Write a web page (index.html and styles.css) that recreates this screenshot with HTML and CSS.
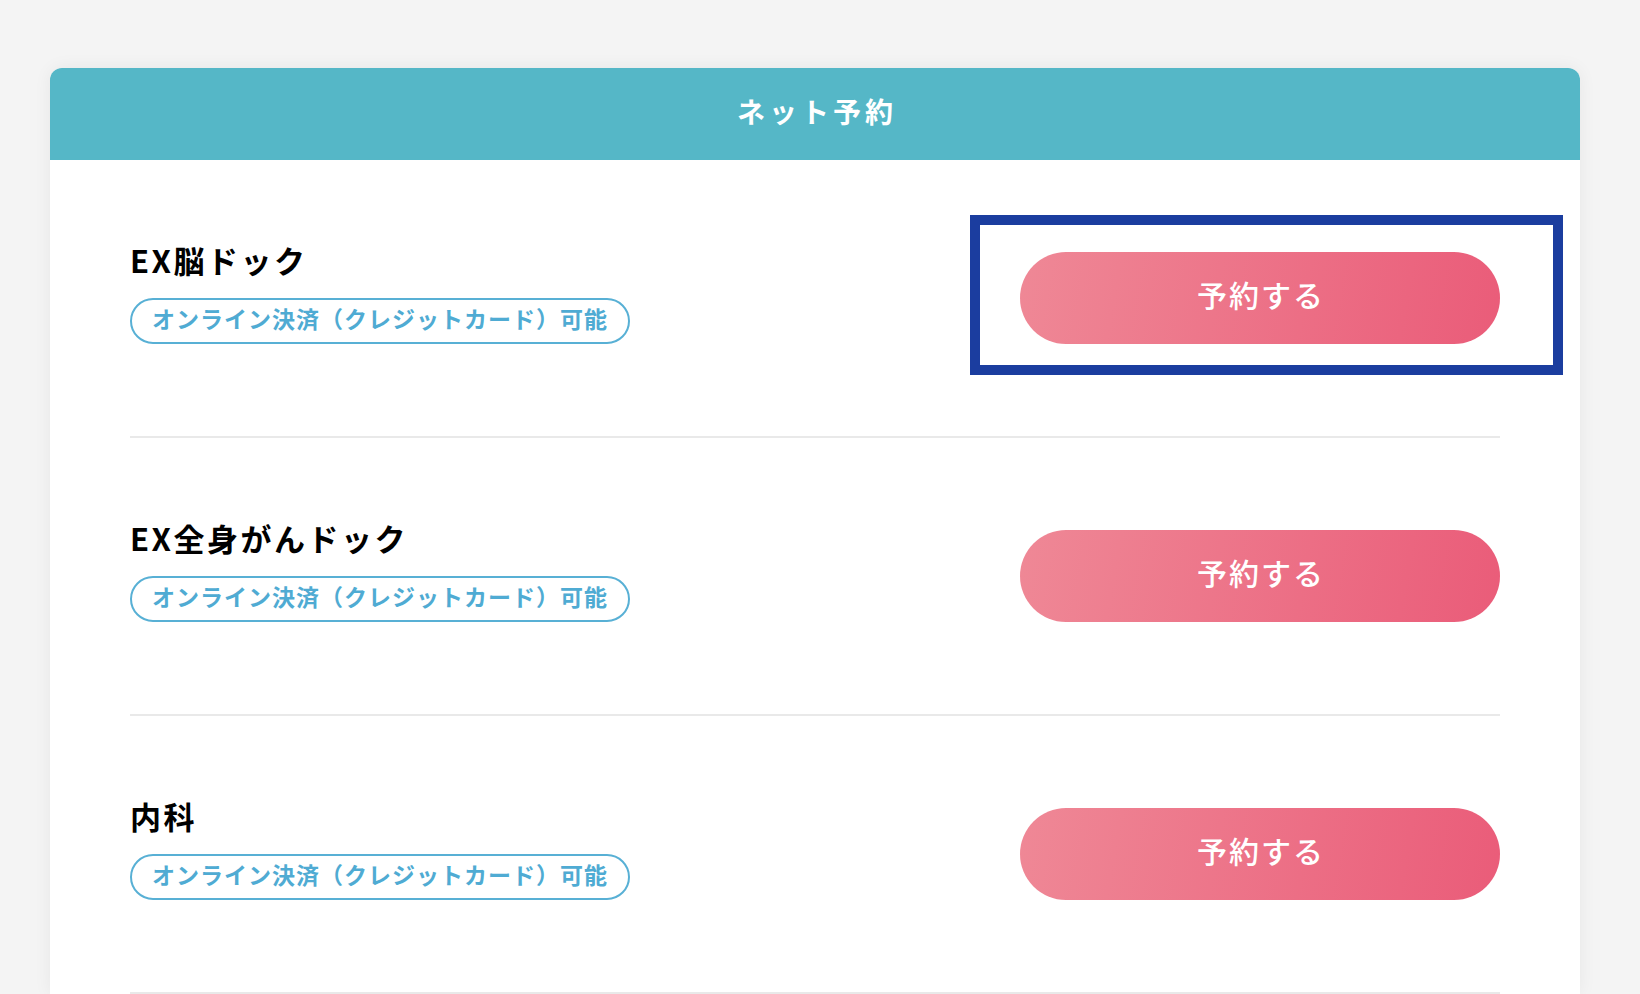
FILE: index.html
```html
<!DOCTYPE html>
<html lang="ja">
<head>
<meta charset="utf-8">
<title>ネット予約</title>
<link rel="stylesheet" href="styles.css">
</head>
<body>
<main class="page">
  <section class="card">
    <h2 class="card-head">ネット予約</h2>
    <ul class="list">
      <li class="row">
        <div class="info">
          <p class="name">EX脳ドック</p>
          <span class="tag">オンライン決済（クレジットカード）可能</span>
        </div>
        <div class="action">
          <a class="btn" href="#">予約する</a>
          <span class="focus-ring"></span>
        </div>
      </li>
      <li class="row">
        <div class="info">
          <p class="name">EX全身がんドック</p>
          <span class="tag">オンライン決済（クレジットカード）可能</span>
        </div>
        <div class="action">
          <a class="btn" href="#">予約する</a>
        </div>
      </li>
      <li class="row">
        <div class="info">
          <p class="name">内科</p>
          <span class="tag">オンライン決済（クレジットカード）可能</span>
        </div>
        <div class="action">
          <a class="btn" href="#">予約する</a>
        </div>
      </li>
    </ul>
  </section>
</main>
</body>
</html>
```

FILE: styles.css
```css
html, body {
  margin: 0;
  padding: 0;
}
body {
  background: #f4f4f4;
  font-family: "Noto Sans CJK JP", "Noto Sans", sans-serif;
  color: #000;
}
.page {
  padding: 68px 0 0 50px;
}
.card {
  width: 1530px;
  background: #fff;
  border-radius: 12px 12px 0 0;
  box-shadow: 0 0 18px rgba(0, 0, 0, 0.06);
}
.card-head {
  margin: 0;
  height: 92px;
  box-sizing: border-box;
  display: flex;
  align-items: center;
  justify-content: center;
  background: #55b7c7;
  color: #fff;
  border-radius: 12px 12px 0 0;
  font-size: 28px;
  font-weight: 700;
  letter-spacing: 4px;
  padding: 0 0 6px 4px;
}
.list {
  list-style: none;
  margin: 0;
  padding: 0 80px;
}
.row {
  display: flex;
  align-items: center;
  justify-content: space-between;
  padding: 92px 0;
  border-bottom: 2px solid #e9e9e9;
}
.info {
  display: flex;
  flex-direction: column;
  align-items: flex-start;
}
.name {
  margin: 0 0 30px;
  font-size: 31px;
  line-height: 16px;
  font-weight: 700;
  letter-spacing: 2.5px;
}
.tag {
  display: inline-flex;
  align-items: center;
  box-sizing: border-box;
  height: 46px;
  padding: 0 20px 6px;
  border: 2px solid #58b0d5;
  border-radius: 24px;
  color: #4fabd3;
  font-size: 23px;
  line-height: 1;
  font-weight: 700;
  letter-spacing: 1px;
}
.action {
  position: relative;
}
.btn {
  display: flex;
  align-items: center;
  justify-content: center;
  box-sizing: border-box;
  width: 480px;
  height: 92px;
  padding: 0 0 8px 2px;
  border-radius: 46px;
  background: linear-gradient(100deg, #ef8896 0%, #ea5c79 100%);
  color: #fff;
  text-decoration: none;
  font-size: 30px;
  font-weight: 500;
  letter-spacing: 2px;
}
.focus-ring {
  position: absolute;
  top: -37px;
  right: -63px;
  bottom: -31px;
  left: -50px;
  border: 10px solid #1b3d9f;
  pointer-events: none;
}
```
